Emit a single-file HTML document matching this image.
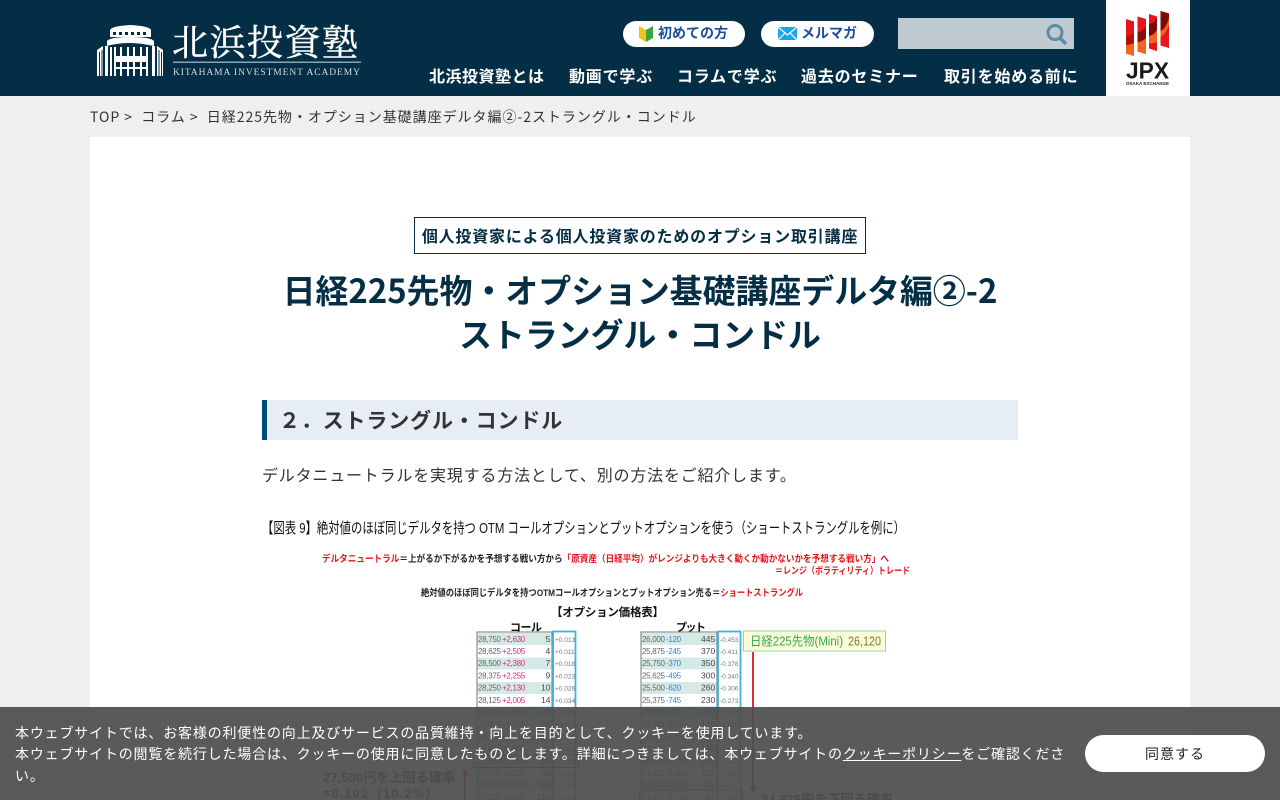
<!DOCTYPE html>
<html lang="ja">
<head>
<meta charset="utf-8">
<title>日経225先物・オプション基礎講座デルタ編②-2 ストラングル・コンドル</title>
<style>
html,body{margin:0;padding:0;width:1280px;height:800px;overflow:hidden;background:#edeff1}
body{position:relative;font-family:"Noto Sans CJK JP","Liberation Sans",sans-serif;color:#333}
.a{position:absolute;white-space:nowrap}
#hdr{left:0;top:0;width:1280px;height:96px;background:#042e46}
.nav{top:64px;font-size:16px;font-weight:700;color:#fff;line-height:22px;letter-spacing:.8px}
.pill{background:#fff;border-radius:13px;height:26px;top:21px}
.pt{top:23px;font-size:14px;font-weight:700;color:#1a4da0;line-height:20px}
svg text{font-family:"Liberation Sans","Noto Sans CJK JP",sans-serif}
.r{font-size:8px;letter-spacing:-.3px;fill:#666}
.p{fill:#d6307f}.b{fill:#3a7fd5}
.v{font-size:8.500px;letter-spacing:0;fill:#444}
.d{font-size:6.500px;fill:#777}
</style>
</head>
<body>
<div class="a" id="hdr"></div>

<svg class="a" style="left:90px;top:15px" width="280" height="70" viewBox="90 15 280 70">
  <g fill="#fff">
    <path d="M110 37V30Q112 26 130 25Q149 26 151 30V37Z"/>
    <path d="M107 46V41Q110 37 130 37Q151 37 154 41V46Q140 43 130 43Q118 43 107 46Z"/>
    <path d="M97 76V50L103 46V76Z"/>
    <path d="M157 46L163 50V76H157Z"/>
    <rect x="105" y="46" width="3" height="30"/>
    <rect x="152" y="46" width="3" height="30"/>
    <rect x="110" y="47" width="2" height="29"/>
    <rect x="114" y="47" width="2" height="29"/>
    <rect x="120" y="47" width="2" height="29"/>
    <rect x="127" y="47" width="2" height="29"/>
    <rect x="133" y="47" width="2" height="29"/>
    <rect x="140" y="47" width="2" height="29"/>
    <rect x="146" y="47" width="2" height="29"/>
    <rect x="116" y="56" width="30" height="6"/>
    <rect x="114" y="67" width="34" height="2"/>
  </g>
  <g fill="#042e46">
    <rect x="113" y="32" width="3" height="3"/><rect x="119" y="32" width="3" height="3"/><rect x="125" y="32" width="3" height="3"/><rect x="131" y="32" width="3" height="3"/><rect x="137" y="32" width="3" height="3"/><rect x="143" y="32" width="3" height="3"/>
    <rect x="99" y="52" width="1" height="24"/><rect x="101.500" y="50" width="1" height="26"/><rect x="158.500" y="50" width="1" height="26"/><rect x="161" y="52" width="1" height="24"/>
  </g>
  <text x="172" y="55" font-size="36" fill="#fff" stroke="#fff" stroke-width=".4" textLength="186" style="font-family:'Noto Serif CJK JP','Noto Serif CJK SC',serif">北浜投資塾</text>
  <rect x="173" y="61.500" width="188" height="1.500" fill="#8ba3b0"/>
  <text x="173" y="75" font-size="9.500" fill="#d5dde1" textLength="187" style="font-family:'Liberation Serif',serif">KITAHAMA INVESTMENT ACADEMY</text>
</svg>

<div class="a pill" style="left:623px;width:122px"></div>
<svg class="a" style="left:639px;top:25px" width="15" height="18" viewBox="0 0 15 18"><path d="M0 1L7 5V17L0 13Z" fill="#f0c419"/><path d="M14 1L7 5V17L14 13Z" fill="#3fa33f"/></svg>
<div class="a pt" style="left:658px">初めての方</div>
<div class="a pill" style="left:761px;width:113px"></div>
<svg class="a" style="left:778px;top:27px" width="19" height="13" viewBox="0 0 19 13"><rect width="19" height="13" fill="#1ea7e8"/><path d="M0 0L9.500 8L19 0M0 13L7 6M19 13L12 6" fill="none" stroke="#fff" stroke-width="1.200"/></svg>
<div class="a pt" style="left:801px">メルマガ</div>

<div class="a" style="left:898px;top:18px;width:176px;height:31px;background:#bfcbd1"></div>
<svg class="a" style="left:1044px;top:22px" width="24" height="24" viewBox="0 0 24 24"><circle cx="11" cy="10.500" r="7" fill="none" stroke="#5b8ba5" stroke-width="3"/><path d="M16 16L22 22" stroke="#5b8ba5" stroke-width="3.500" fill="none"/></svg>

<div class="a nav" style="left:429px;letter-spacing:.5px">北浜投資塾とは</div>
<div class="a nav" style="left:569px">動画で学ぶ</div>
<div class="a nav" style="left:677px">コラムで学ぶ</div>
<div class="a nav" style="left:801px">過去のセミナー</div>
<div class="a nav" style="left:944px">取引を始める前に</div>

<div class="a" style="left:1106px;top:0;width:84px;height:96px;background:#fff"></div>
<svg class="a" style="left:1106px;top:0" width="84" height="96" viewBox="1106 0 84 96">
  <path d="M1126 19L1134 21.500V56L1126 53.500Z" fill="#e8141c"/>
  <path d="M1126 36Q1130 36 1134 33V43Q1130 45 1126 45Z" fill="#b01010"/>
  <path d="M1126 45Q1130 45 1134 43V56L1126 53.500Z" fill="#f0641e"/>
  <path d="M1137.500 16.500L1146 19V54L1137.500 51.500Z" fill="#e8141c"/>
  <path d="M1137.500 32Q1142 32 1146 27V38Q1142 42 1137.500 42Z" fill="#8a0d0a"/>
  <path d="M1137.500 42Q1142 42 1146 38V54L1137.500 51.500Z" fill="#f0641e"/>
  <path d="M1149 14L1157 16.500V51L1149 48.500Z" fill="#e8141c"/>
  <path d="M1149 24Q1154 24 1157 18V30Q1154 35 1149 36Z" fill="#7a0c08"/>
  <path d="M1149 36Q1154 35 1157 30V42Q1153 44 1149 43Z" fill="#f0641e"/>
  <path d="M1160.500 11L1169 13.500V48L1160.500 45.500Z" fill="#e8141c"/>
  <path d="M1160.500 11L1169 13.500V18Q1166 29 1160.500 31Z" fill="#7a0c08"/>
  <path d="M1160.500 31Q1166 29 1169 18V25Q1166 34 1160.500 37Z" fill="#f0641e"/>
  <text x="1126" y="78.500" font-size="23" font-weight="700" fill="#1a1a1a" textLength="43" lengthAdjust="spacingAndGlyphs">JPX</text>
  <text x="1126" y="85" font-size="4.500" font-weight="700" fill="#222" textLength="43">OSAKA EXCHANGE</text>
</svg>

<div class="a" style="left:90px;top:107px;font-size:14px;letter-spacing:.97px;line-height:20px;color:#333;white-space:pre">TOP &gt;  コラム &gt;  日経225先物・オプション基礎講座デルタ編②-2ストラングル・コンドル</div>

<div class="a" style="left:90px;top:137px;width:1100px;height:663px;background:#fff"></div>

<div class="a" style="left:414px;top:217px;width:450px;height:35px;border:1px solid #042e46;text-align:center;font-size:16px;font-weight:700;letter-spacing:.8px;line-height:35px;color:#042e46">個人投資家による個人投資家のためのオプション取引講座</div>

<div class="a" style="left:90px;top:268px;width:1100px;text-align:center;font-size:32.900px;font-weight:700;line-height:44px;color:#042e46">日経225先物・オプション基礎講座デルタ編②-2</div>
<div class="a" style="left:90px;top:312px;width:1100px;text-align:center;font-size:32.900px;font-weight:700;line-height:44px;color:#042e46">ストラングル・コンドル</div>

<div class="a" style="left:262px;top:400px;width:751px;height:40px;background:#e6edf4;border-left:5px solid #004a7c"></div>
<div class="a" style="left:279px;top:404px;font-size:21px;font-weight:700;letter-spacing:.85px;line-height:32px;color:#333">２．ストラングル・コンドル</div>

<div class="a" style="left:262px;top:461px;font-size:16px;letter-spacing:.8px;line-height:26px;color:#333">デルタニュートラルを実現する方法として、別の方法をご紹介します。</div>

<svg class="a" style="left:0;top:0;filter:blur(.3px)" width="1280" height="800" viewBox="0 0 1280 800">
  <text x="262" y="533" font-size="15" fill="#111" textLength="643" lengthAdjust="spacingAndGlyphs">【図表 9】絶対値のほぼ同じデルタを持つ OTM コールオプションとプットオプションを使う（ショートストラングルを例に）</text>
  <g font-size="9.500" font-weight="700">
    <text x="322" y="562" fill="#222" textLength="567" lengthAdjust="spacingAndGlyphs"><tspan fill="#e0161c">デルタニュートラル</tspan>＝上がるか下がるかを予想する戦い方から<tspan fill="#e0161c">「原資産（日経平均）がレンジよりも大きく動くか動かないかを予想する戦い方」へ</tspan></text>
    <text x="775" y="574" fill="#e0161c" textLength="135" lengthAdjust="spacingAndGlyphs">＝レンジ（ボラティリティ）トレード</text>
    <text x="421" y="596" fill="#222" font-size="9.500" textLength="382" lengthAdjust="spacingAndGlyphs">絶対値のほぼ同じデルタを持つOTMコールオプションとプットオプション売る＝<tspan fill="#e0161c">ショートストラングル</tspan></text>
  </g>
  <text x="551" y="616" font-size="11.500" font-weight="700" fill="#111" textLength="113">【オプション価格表】</text>
  <text x="510" y="631" font-size="11" font-weight="700" fill="#111" textLength="32">コール</text>
  <text x="676" y="631" font-size="11" font-weight="700" fill="#111" textLength="30">プット</text>

  <g fill="#d5eae6">
    <rect x="477" y="633" width="75" height="12"/><rect x="477" y="657.500" width="75" height="12"/><rect x="477" y="682" width="75" height="12"/><rect x="477" y="706" width="75" height="12"/><rect x="477" y="731" width="75" height="12"/><rect x="477" y="755" width="75" height="12"/><rect x="477" y="779" width="75" height="12"/>
    <rect x="641" y="633" width="76" height="12"/><rect x="641" y="657.500" width="76" height="12"/><rect x="641" y="682" width="76" height="12"/><rect x="641" y="706" width="76" height="12"/><rect x="641" y="731" width="76" height="12"/><rect x="641" y="755" width="76" height="12"/><rect x="641" y="779" width="76" height="12"/>
  </g>
  <path d="M477 805V632H552V805M641 805V632H717V805" fill="none" stroke="#777" stroke-width="1"/>
  <rect x="553" y="631.500" width="22.500" height="180" fill="none" stroke="#3bb3e0" stroke-width="1.800"/>
  <rect x="718" y="631.500" width="22.500" height="180" fill="none" stroke="#3bb3e0" stroke-width="1.800"/>

  <g class="r">
    <text y="642"><tspan x="478">28,750</tspan><tspan x="502" class="p">+2,630</tspan><tspan x="545.500" class="v">5</tspan></text>
    <text y="654"><tspan x="478">28,625</tspan><tspan x="502" class="p">+2,505</tspan><tspan x="545.500" class="v">4</tspan></text>
    <text y="666"><tspan x="478">28,500</tspan><tspan x="502" class="p">+2,380</tspan><tspan x="545.500" class="v">7</tspan></text>
    <text y="678.500"><tspan x="478">28,375</tspan><tspan x="502" class="p">+2,255</tspan><tspan x="545.500" class="v">9</tspan></text>
    <text y="690.500"><tspan x="478">28,250</tspan><tspan x="502" class="p">+2,130</tspan><tspan x="541" class="v">10</tspan></text>
    <text y="703"><tspan x="478">28,125</tspan><tspan x="502" class="p">+2,005</tspan><tspan x="541" class="v">14</tspan></text>
    <text y="715"><tspan x="478">28,000</tspan><tspan x="502" class="p">+1,880</tspan><tspan x="541" class="v">18</tspan></text>
    <text y="727"><tspan x="478">27,875</tspan><tspan x="502" class="p">+1,755</tspan><tspan x="541" class="v">24</tspan></text>
    <text y="739.500"><tspan x="478">27,750</tspan><tspan x="502" class="p">+1,630</tspan><tspan x="541" class="v">32</tspan></text>
    <text y="751.500"><tspan x="478">27,625</tspan><tspan x="502" class="p">+1,505</tspan><tspan x="541" class="v">42</tspan></text>
    <text y="764"><tspan x="478">27,500</tspan><tspan x="502" class="p">+1,380</tspan><tspan x="541" class="v">55</tspan></text>
    <text y="776"><tspan x="478">27,375</tspan><tspan x="502" class="p">+1,255</tspan><tspan x="541" class="v">69</tspan></text>
    <text y="788"><tspan x="478">27,250</tspan><tspan x="502" class="p">+1,130</tspan><tspan x="541" class="v">82</tspan></text>
    <text y="800"><tspan x="478">27,125</tspan><tspan x="502" class="p">+1,005</tspan><tspan x="537" class="v">115</tspan></text>

    <text y="642"><tspan x="642">26,000</tspan><tspan x="666" class="b">-120</tspan><tspan x="701" class="v">445</tspan></text>
    <text y="654"><tspan x="642">25,875</tspan><tspan x="666" class="b">-245</tspan><tspan x="701" class="v">370</tspan></text>
    <text y="666"><tspan x="642">25,750</tspan><tspan x="666" class="b">-370</tspan><tspan x="701" class="v">350</tspan></text>
    <text y="678.500"><tspan x="642">25,625</tspan><tspan x="666" class="b">-495</tspan><tspan x="701" class="v">300</tspan></text>
    <text y="690.500"><tspan x="642">25,500</tspan><tspan x="666" class="b">-620</tspan><tspan x="701" class="v">260</tspan></text>
    <text y="703"><tspan x="642">25,375</tspan><tspan x="666" class="b">-745</tspan><tspan x="701" class="v">230</tspan></text>
    <text y="715"><tspan x="642">25,250</tspan><tspan x="666" class="b">-870</tspan><tspan x="701" class="v">210</tspan></text>
    <text y="727"><tspan x="642">25,125</tspan><tspan x="666" class="b">-995</tspan><tspan x="701" class="v">175</tspan></text>
    <text y="739.500"><tspan x="642">25,000</tspan><tspan x="666" class="b">-1,120</tspan><tspan x="701" class="v">160</tspan></text>
    <text y="751.500"><tspan x="642">24,875</tspan><tspan x="666" class="b">-1,245</tspan><tspan x="701" class="v">140</tspan></text>
    <text y="764"><tspan x="642">24,750</tspan><tspan x="666" class="b">-1,370</tspan><tspan x="701" class="v">125</tspan></text>
    <text y="776"><tspan x="642">24,625</tspan><tspan x="666" class="b">-1,495</tspan><tspan x="701" class="v">110</tspan></text>
    <text y="788"><tspan x="642">24,500</tspan><tspan x="666" class="b">-1,620</tspan><tspan x="705.500" class="v">98</tspan></text>
    <text y="800"><tspan x="642">24,375</tspan><tspan x="666" class="b">-1,745</tspan><tspan x="705.500" class="v">81</tspan></text>
  </g>
  <g class="d">
    <text x="555" y="642">+0.013</text><text x="555" y="654">+0.011</text><text x="555" y="666">+0.018</text><text x="555" y="678.500">+0.023</text><text x="555" y="690.500">+0.026</text><text x="555" y="703">+0.034</text><text x="555" y="715">+0.044</text><text x="555" y="727">+0.058</text><text x="555" y="739.500">+0.070</text><text x="555" y="751.500">+0.085</text><text x="555" y="764">+0.102</text><text x="555" y="776">+0.121</text><text x="555" y="788">+0.142</text><text x="555" y="800">+0.165</text>
    <text x="720" y="642">-0.453</text><text x="720" y="654">-0.411</text><text x="720" y="666">-0.378</text><text x="720" y="678.500">-0.340</text><text x="720" y="690.500">-0.306</text><text x="720" y="703">-0.273</text><text x="720" y="715">-0.245</text><text x="720" y="727">-0.215</text><text x="720" y="739.500">-0.190</text><text x="720" y="751.500">-0.165</text><text x="720" y="764">-0.145</text><text x="720" y="776">-0.125</text><text x="720" y="788">-0.112</text><text x="720" y="800">-0.102</text>
  </g>
  <rect x="743.500" y="631" width="142" height="20" fill="#fbfdd8" stroke="#8fd6a8"/>
  <text x="750" y="645.500" font-size="12.500" fill="#3aa655" textLength="93" lengthAdjust="spacingAndGlyphs">日経225先物(Mini)</text>
  <text x="848" y="645.500" font-size="12.500" fill="#7d7d2e" textLength="33" lengthAdjust="spacingAndGlyphs">26,120</text>
  <path d="M753 652V790" stroke="#e0161c" stroke-width="1.800" fill="none"/>
  <path d="M749.500 786L753 793L756.500 786Z" fill="#e0161c"/>
  <rect x="473.500" y="755" width="105" height="12.500" fill="none" stroke="#e0161c"/>
  <rect x="639.500" y="790" width="103" height="14" fill="none" stroke="#e0161c"/>
  <path d="M465 772V805" stroke="#e0161c" stroke-width="1.800" fill="none"/>
  <path d="M461.500 775L465 768L468.500 775Z" fill="#e0161c"/>
  <text x="323" y="782" font-size="13" font-weight="700" fill="#333" textLength="132">27,500円を上回る確率</text>
  <text x="323" y="798" font-size="13" font-weight="700" fill="#333" textLength="115">=0.102（10.2%）</text>
  <text x="761" y="804" font-size="13" font-weight="700" fill="#333" textLength="132">24,375円を下回る確率</text>
</svg>

<div class="a" style="left:0;top:707px;width:1280px;height:93px;background:rgba(78,78,78,.93)"></div>
<div class="a" style="left:15px;top:722.500px;width:1055px;font-size:14px;letter-spacing:.82px;line-height:21.500px;color:#fff;white-space:normal">本ウェブサイトでは、お客様の利便性の向上及びサービスの品質維持・向上を目的として、クッキーを使用しています。<br>本ウェブサイトの閲覧を続行した場合は、クッキーの使用に同意したものとします。詳細につきましては、本ウェブサイトの<span style="text-decoration:underline">クッキーポリシー</span>をご確認ください。</div>
<div class="a" style="left:1085px;top:735px;width:180px;height:37px;border-radius:19px;background:#fff;text-align:center;line-height:38px;font-size:14px;letter-spacing:1px;color:#222">同意する</div>
</body>
</html>
